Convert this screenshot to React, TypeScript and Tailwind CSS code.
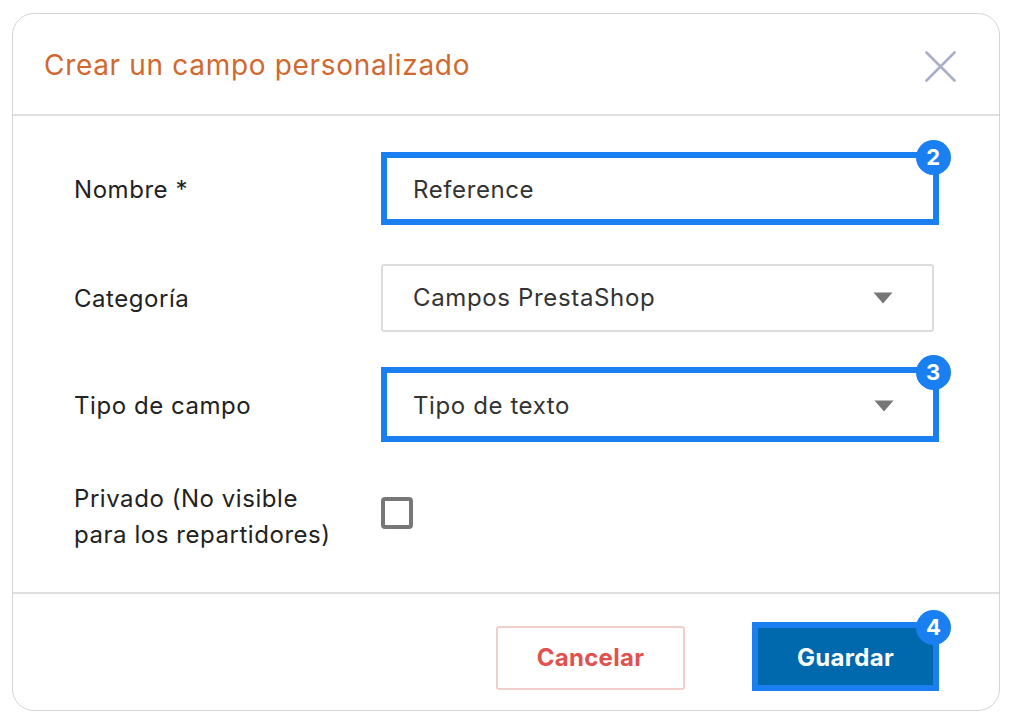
import React from 'react';

const fontStack = 'font-["Inter","Noto_Sans",sans-serif]';

function Badge({ n }: { n: number }) {
  return (
    <span className="absolute right-[-18px] top-[-18px] flex h-[35px] w-[35px] items-center justify-center rounded-full bg-[#1a7ff0] text-[22px] font-bold text-white">
      {n}
    </span>
  );
}

function Caret() {
  return (
    <svg width="20" height="12" viewBox="0 0 20 12" className="shrink-0">
      <path d="M0.5 0.5h19L10 11.5z" fill="#777777" />
    </svg>
  );
}

function FormRow({ label, className = '', children }: { label: React.ReactNode; className?: string; children: React.ReactNode }) {
  return (
    <div className={`flex items-center ${className}`}>
      <div className="w-[307px] shrink-0 pt-[2px] text-[24px] leading-[36px] tracking-[0.55px] text-[#222222]">{label}</div>
      {children}
    </div>
  );
}

export default function App() {
  return (
    <div className={`h-[724px] w-[1012px] bg-white pl-[12px] pt-[13px] ${fontStack}`}>
      <div className="flex h-[698px] w-[988px] flex-col rounded-[22px] border border-[#d4d4d4] bg-white">
        {/* Header */}
        <div className="flex h-[102px] shrink-0 items-center justify-between border-b-2 border-[#e0e0e0] pl-[31px] pr-[43px]">
          <h1 className="pt-[2px] text-[28px] font-normal tracking-[0.68px] text-[#d0692f]">Crear un campo personalizado</h1>
          <svg width="31" height="31" viewBox="0 0 31 31" fill="none" stroke="#a9aec9" strokeWidth="2.6" strokeLinecap="round" className="mt-[5px]">
            <path d="M1.5 1.5l28 28M29.5 1.5l-28 28" />
          </svg>
        </div>

        {/* Form */}
        <div className="flex h-[478px] shrink-0 flex-col border-b-2 border-[#e0e0e0] pl-[61px] pt-[36px]">
          <FormRow label="Nombre *">
            <div className="relative flex h-[73px] w-[558px] items-center border-[6px] border-[#1a7ff0] pl-[26px] pt-[2px] text-[24px] tracking-[0.6px] text-[#333333]">
              Reference
              <Badge n={2} />
            </div>
          </FormRow>

          <FormRow label="Categoría" className="mt-[39px]">
            <div className="flex h-[68px] w-[553px] items-center justify-between rounded-[3px] border-2 border-[#dddddd] pl-[30px] pr-[39px] text-[24px] tracking-[0.65px] text-[#333333]">
              Campos PrestaShop
              <Caret />
            </div>
          </FormRow>

          <FormRow label="Tipo de campo" className="mt-[35px]">
            <div className="relative flex h-[75px] w-[558px] items-center justify-between border-[6px] border-[#1a7ff0] pl-[26px] pr-[39px] pt-[2px] text-[24px] tracking-[0.6px] text-[#333333]">
              Tipo de texto
              <Caret />
              <Badge n={3} />
            </div>
          </FormRow>

          <FormRow
            label={
              <>
                Privado (No visible
                <br />
                para los repartidores)
              </>
            }
            className="mt-[37px] !items-start"
          >
            <div className="mt-[18px] h-[32px] w-[32px] rounded-[4px] border-[4px] border-[#777777]" />
          </FormRow>
        </div>

        {/* Footer */}
        <div className="flex flex-1 items-start justify-end pr-[60px] pt-[28px]">
          <button className="mt-[4px] h-[64px] w-[189px] rounded-[3px] border-2 border-[#f3cfcc] text-[24px] font-bold tracking-[0.3px] text-[#e0524f]">
            Cancelar
          </button>
          <button className="relative ml-[67px] h-[69px] w-[187px] border-[6px] border-[#1a7ff0] bg-[#0068ad] pt-[2px] text-[24px] font-bold tracking-[0.3px] text-white">
            Guardar
            <Badge n={4} />
          </button>
        </div>
      </div>
    </div>
  );
}
